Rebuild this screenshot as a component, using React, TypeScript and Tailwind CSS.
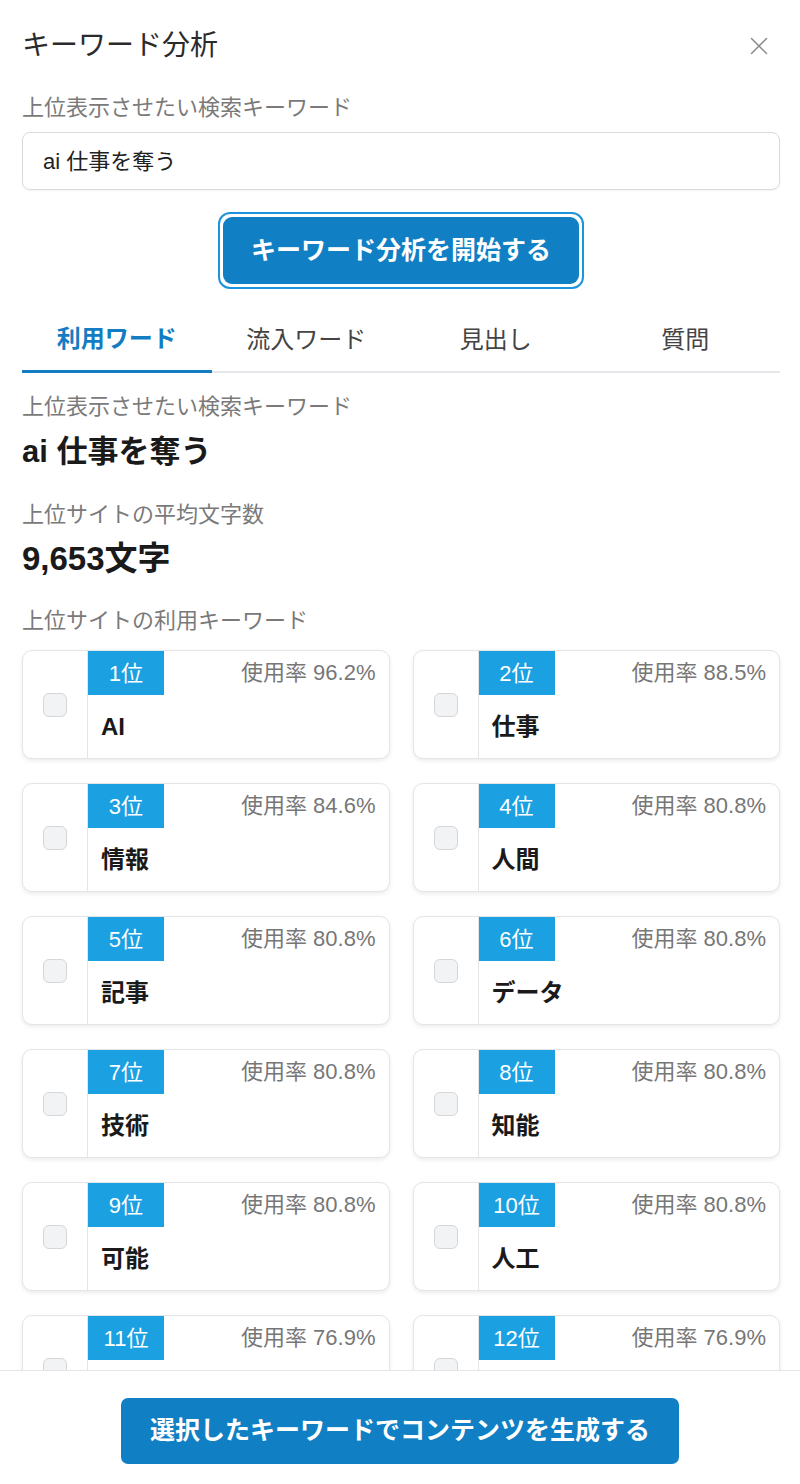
import { X } from "lucide-react";

const keywords = [
    { rank: 1, word: "AI", rate: "96.2%" },
    { rank: 2, word: "仕事", rate: "88.5%" },
    { rank: 3, word: "情報", rate: "84.6%" },
    { rank: 4, word: "人間", rate: "80.8%" },
    { rank: 5, word: "記事", rate: "80.8%" },
    { rank: 6, word: "データ", rate: "80.8%" },
    { rank: 7, word: "技術", rate: "80.8%" },
    { rank: 8, word: "知能", rate: "80.8%" },
    { rank: 9, word: "可能", rate: "80.8%" },
    { rank: 10, word: "人工", rate: "80.8%" },
    { rank: 11, word: "", rate: "76.9%" },
    { rank: 12, word: "", rate: "76.9%" },
];

const tabs = ["利用ワード", "流入ワード", "見出し", "質問"];

const KeywordCard = ({ rank, word, rate }: { rank: number; word: string; rate: string }) => (
    <div className="flex h-[109px] overflow-hidden rounded-[10px] border border-[#e3e5e8] bg-white shadow-[0_2px_4px_rgba(0,0,0,0.08)]">
        {/* checkbox column */}
        <div className="flex w-[65px] shrink-0 items-center justify-center border-r border-[#e3e5e8]">
            <div className="h-[24px] w-[24px] rounded-[6px] border border-[#d4d6da] bg-[#f2f3f5]" />
        </div>
        <div className="flex flex-1 flex-col">
            <div className="flex items-start justify-between">
                <div className="flex h-[44px] w-[76px] items-center justify-center bg-[#1ba1e2] text-[22px] text-white">
                    {rank}位
                </div>
                <div className="pr-[13px] pt-[7px] text-[22px] leading-[30px] text-[#777]">使用率 {rate}</div>
            </div>
            <div className="pl-[13px] pt-[17px] text-[24px] font-bold leading-[30px] text-[#1a1a1a]">{word}</div>
        </div>
    </div>
);

export default function App() {
    return (
        <div
            className="flex h-[1484px] w-[800px] flex-col overflow-hidden bg-white"
            style={{ fontFamily: '"Liberation Sans", "Noto Sans CJK JP", sans-serif' }}
        >
            {/* scrollable body */}
            <div className="h-[1370px] shrink-0 overflow-hidden pl-[22px] pr-[20px] pt-[28px]">
                <div className="flex h-[36px] items-center justify-between">
                    <h1 className="text-[28px] leading-[36px] text-[#2b2b2b]">キーワード分析</h1>
                    <X className="mr-[6px] h-[30px] w-[30px] text-[#8a8a8a]" strokeWidth={1.2} />
                </div>

                <p className="mt-[29px] text-[22px] leading-[30px] text-[#7a7a7a]">上位表示させたい検索キーワード</p>
                <div className="mt-[9px] flex h-[58px] items-center rounded-[8px] border border-[#d9dbde] px-[20px] text-[22px] text-[#222] shadow-[0_1px_2px_rgba(0,0,0,0.05)]">
                    ai 仕事を奪う
                </div>

                <div className="mt-[22px] flex justify-center">
                    <div className="rounded-[12px] border-2 border-[#1c94dc] p-[3px]">
                        <button className="flex h-[67px] w-[356px] items-center justify-center rounded-[9px] bg-[#107fc4] text-[25px] font-bold text-white">
                            キーワード分析を開始する
                        </button>
                    </div>
                </div>

                {/* tabs */}
                <div className="mt-[22px] flex border-b-2 border-[#e6e8eb]">
                    {tabs.map((t, i) => (
                        <div
                            key={t}
                            className={
                                i === 0
                                    ? "-mb-[2px] flex h-[62px] flex-1 items-center justify-center border-b-[3px] border-[#137cc2] pb-[4px] text-[24px] font-bold text-[#137cc2]"
                                    : "flex h-[60px] flex-1 items-center justify-center pb-[2px] text-[24px] text-[#444]"
                            }
                        >
                            {t}
                        </div>
                    ))}
                </div>

                <p className="mt-[19px] text-[22px] leading-[30px] text-[#7a7a7a]">上位表示させたい検索キーワード</p>
                <p className="mt-[10px] text-[31px] font-bold leading-[40px] text-[#1a1a1a]">ai 仕事を奪う</p>

                <p className="mt-[28px] text-[22px] leading-[30px] text-[#7a7a7a]">上位サイトの平均文字数</p>
                <p className="mt-[9px] text-[33px] font-bold leading-[40px] text-[#1a1a1a]">9,653文字</p>

                <p className="mt-[27px] text-[22px] leading-[30px] text-[#7a7a7a]">上位サイトの利用キーワード</p>
                <div className="mt-[14px] grid grid-cols-2 gap-x-[23px] gap-y-[24px]">
                    {keywords.map((k) => (
                        <KeywordCard key={k.rank} {...k} />
                    ))}
                </div>
            </div>

            {/* footer */}
            <div className="flex flex-1 justify-center border-t border-[#e3e5e8] bg-white pt-[27px]">
                <button className="flex h-[66px] w-[558px] items-center justify-center rounded-[7px] bg-[#107fc4] text-[25px] font-bold text-white">
                    選択したキーワードでコンテンツを生成する
                </button>
            </div>
        </div>
    );
}
